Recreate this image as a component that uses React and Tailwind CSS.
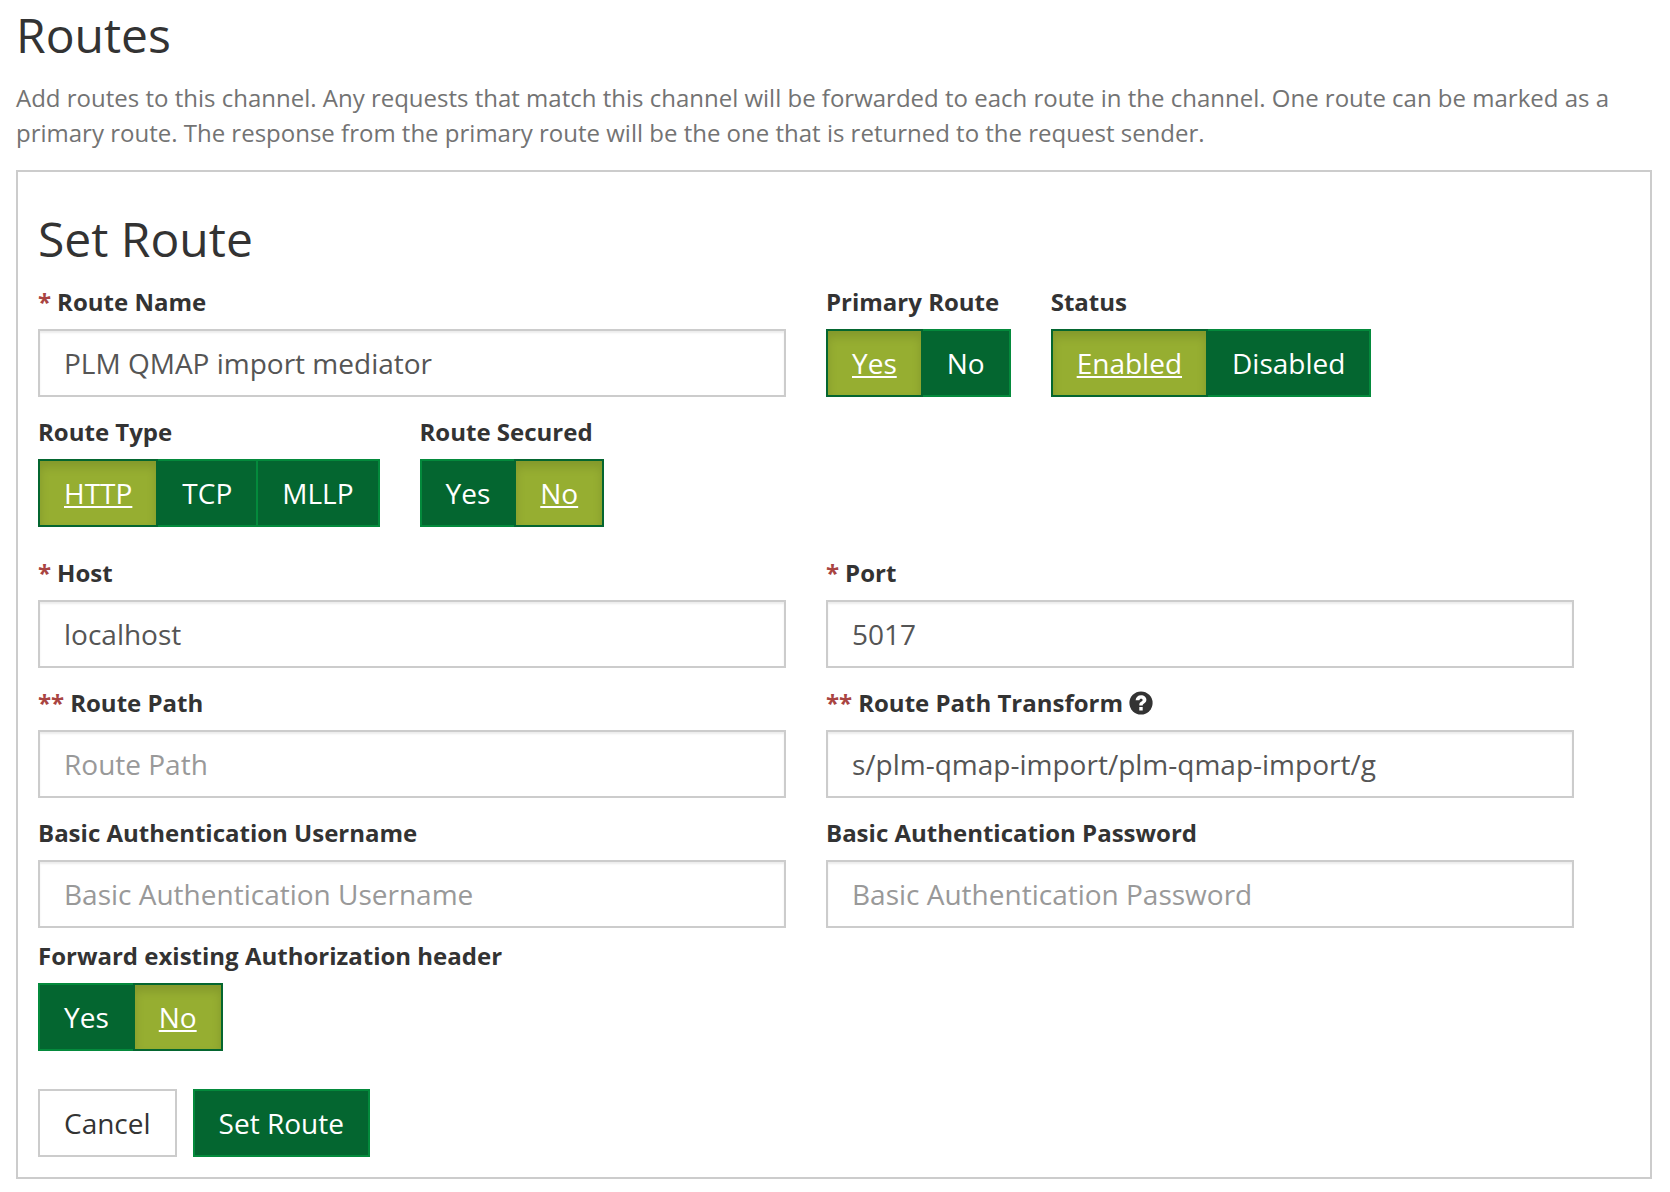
import React from "react";

function Label({ text, req = "", htmlFor, id, children }) {
  const cls = "flex h-8 items-center gap-1.5 text-[24px] leading-8 font-bold text-[#333]";
  const inner = (
    <>
      {req && <span className="text-[#a94442]">{req}</span>}
      <span>{text}</span>
      {children}
    </>
  );
  return htmlFor ? <label htmlFor={htmlFor} className={cls}>{inner}</label> : <div id={id} className={cls}>{inner}</div>;
}

function Field({ id, label, req, value, placeholder, type = "text", help }) {
  return (
    <div className="min-w-0">
      <Label text={label} req={req} htmlFor={id}>{help}</Label>
      <input
        id={id}
        type={type}
        defaultValue={value}
        placeholder={placeholder}
        className="mt-[11px] block h-[68px] w-full border-2 border-[#ccc] bg-white px-6 text-[28px] text-[#555] shadow-[inset_0_2px_2px_rgba(0,0,0,0.075)] outline-none placeholder:text-[#999] placeholder:opacity-100"
      />
    </div>
  );
}

function Toggle({ id, label, options, initial }) {
  const [active, setActive] = React.useState(initial);
  return (
    <div>
      <Label id={id} text={label} />
      <div role="group" aria-labelledby={id} className="mt-[11px] flex">
        {options.map((o) => (
          <button
            key={o}
            type="button"
            aria-pressed={o === active}
            onClick={() => setActive(o)}
            className={
              "-ml-0.5 h-[68px] border-2 px-6 text-[28px] text-white first:ml-0 " +
              (o === active
                ? "relative z-10 border-[#046630] bg-[#96ae31] underline shadow-[inset_0_6px_10px_rgba(0,0,0,0.125)]"
                : "border-[#048a3c] bg-[#046630]")
            }
          >
            {o}
          </button>
        ))}
      </div>
    </div>
  );
}

function Help() {
  return (
    <svg viewBox="0 0 24 24" className="h-6 w-6" aria-hidden="true">
      <circle cx="12" cy="12" r="11.6" fill="#333" />
      <path d="M6.6 9.3C6.8 6.2 8.9 4.2 12 4.2c3.1 0 5.4 1.8 5.4 4.6 0 1.9-1 2.9-2.3 3.7-1.1.7-1.4 1.1-1.4 2.1h-3.4c0-2.2.5-3.1 2.1-4 .9-.6 1.2-.9 1.2-1.6 0-.8-.6-1.3-1.5-1.3-1 0-1.6.5-1.7 1.6zM10.3 16h3.4v3.5h-3.4z" fill="#fff" />
    </svg>
  );
}

export default function App() {
  return (
    <main className="pr-[18px] pl-4 pt-3 pb-3 font-['Open_Sans','Noto_Sans',sans-serif] text-[#333]">
      <h1 className="text-[48px] leading-[46px]">Routes</h1>
      <p className="mt-[22px] text-[24px] leading-[35px] text-[#737373]">
        Add routes to this channel. Any requests that match this channel will be forwarded to each route in the channel. One route can be marked as a primary route. The response from the primary route will be the one that is returned to the request sender.
      </p>
      <form onSubmit={(e) => e.preventDefault()} className="mt-5 border-2 border-[#ccc] px-5 pb-5 pt-[41px]">
        <h2 className="text-[48px] leading-[52px]">Set Route</h2>
        <div className="mr-14 mt-[21px] grid grid-cols-2 gap-x-10">
          <Field id="name" label="Route Name" req="*" value="PLM QMAP import mediator" />
          <div className="flex gap-10">
            <Toggle id="primary" label="Primary Route" options={["Yes", "No"]} initial="Yes" />
            <Toggle id="status" label="Status" options={["Enabled", "Disabled"]} initial="Enabled" />
          </div>
        </div>
        <div className="mt-[19px] flex gap-10">
          <Toggle id="type" label="Route Type" options={["HTTP", "TCP", "MLLP"]} initial="HTTP" />
          <Toggle id="secured" label="Route Secured" options={["Yes", "No"]} initial="No" />
        </div>
        <div className="mr-14 mt-[30px] grid grid-cols-2 gap-x-10 gap-y-[19px]">
          <Field id="host" label="Host" req="*" value="localhost" />
          <Field id="port" label="Port" req="*" value="5017" />
          <Field id="path" label="Route Path" req="**" placeholder="Route Path" />
          <Field id="transform" label="Route Path Transform" req="**" value="s/plm-qmap-import/plm-qmap-import/g" help={<Help />} />
          <Field id="user" label="Basic Authentication Username" placeholder="Basic Authentication Username" />
          <Field id="pass" type="password" label="Basic Authentication Password" placeholder="Basic Authentication Password" />
        </div>
        <div className="mt-3">
          <Toggle id="forward" label="Forward existing Authorization header" options={["Yes", "No"]} initial="No" />
        </div>
        <div className="mt-[38px] flex gap-4">
          <button type="button" className="h-[68px] border-2 border-[#ccc] bg-white px-6 text-[28px] text-[#333]">Cancel</button>
          <button type="submit" className="h-[68px] border-2 border-[#048a3c] bg-[#046630] px-6 text-[28px] text-white">Set Route</button>
        </div>
      </form>
    </main>
  );
}
